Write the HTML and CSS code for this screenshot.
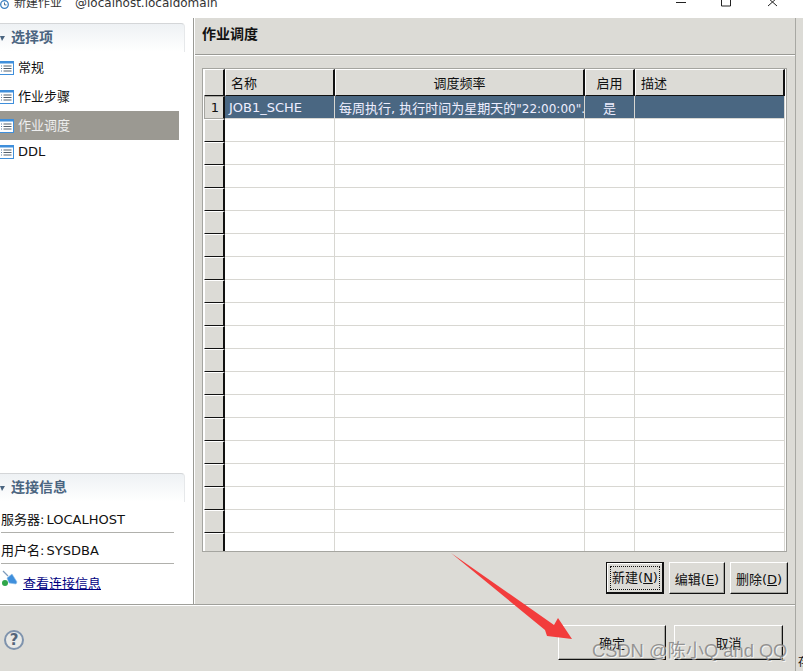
FILE: index.html
```html
<!DOCTYPE html>
<html lang="zh-CN">
	<head>
		<meta charset="UTF-8" />
		<title>新建作业</title>
		<link rel="stylesheet" href="styles.css">
	</head>
	<body>
		<svg class="defs" width="0" height="0">
			<symbol id="page-icon" viewBox="0 0 16 14">
				<rect x="0.5" y="0.5" width="15" height="13" fill="#fff" stroke="#3f8fdc"/>
				<rect x="1" y="1" width="14" height="1.5" fill="#3f8fdc"/>
				<path d="M3 5h1M3 7.5h1M3 10h1" stroke="#5a7fa8" fill="none"/>
				<path d="M5.5 5h8M5.5 7.5h8M5.5 10h8" stroke="#55606c" fill="none"/>
			</symbol>
		</svg>

		<!-- 标题栏 -->
		<div class="titlebar">
			<svg class="title-icon" width="9" height="10" viewBox="0 0 9 10">
				<circle cx="4.5" cy="4.5" r="3.8" fill="#fff" stroke="#3b7fc0" stroke-width="1.3"/>
				<path d="M4.5 2.5v2.4h2" stroke="#3b6f9f" fill="none"/>
			</svg>
			<span class="title-name">新建作业</span>
			<span class="title-host">@localhost.localdomain</span>
			<div class="win-controls">
				<svg width="103" height="10" viewBox="0 0 103 10">
					<path d="M0 2.5h10" stroke="#222" fill="none"/>
					<path d="M45.5 -3h9v9h-9z" stroke="#222" fill="none"/>
					<path d="M92 -2l9 8M101 -2l-9 8" stroke="#222" fill="none"/>
				</svg>
			</div>
		</div>

		<div class="window">
			<div class="main">
				<!-- 左侧：选择项 & 连接信息 -->
				<div class="sidebar">
					<div>
						<div class="section-head"><i class="twisty"></i>选择项</div>
						<ul class="nav">
							<li><svg class="nav-icon"><use href="#page-icon"/></svg>常规</li>
							<li><svg class="nav-icon"><use href="#page-icon"/></svg>作业步骤</li>
							<li class="active"><svg class="nav-icon"><use href="#page-icon"/></svg>作业调度</li>
							<li class="short"><svg class="nav-icon"><use href="#page-icon"/></svg>DDL</li>
						</ul>
					</div>
					<div>
						<div class="section-head info-head"><i class="twisty"></i>连接信息</div>
						<div class="info-row">服务器: LOCALHOST</div>
						<div class="info-row">用户名: SYSDBA</div>
						<div class="link-row">
							<svg width="18" height="18" viewBox="0 0 18 18">
								<path d="M2 2l5 5" stroke="#7f9cbc" stroke-width="1.2" fill="none"/>
								<path d="M6 9l5-4 5 8-1 2-7-1z" fill="#3f8fdc" stroke="#8fc0ea" stroke-width="0.6"/>
								<circle cx="4" cy="14" r="3" fill="#2fa64a"/>
							</svg>
							<a href="#">查看连接信息</a>
						</div>
					</div>
				</div>

				<!-- 右侧：作业调度 -->
				<div class="content">
					<div class="content-head">作业调度</div>
					<div class="content-body">
						<div class="grid-box">
							<table class="grid">
								<colgroup>
									<col class="c-no"><col class="c-name"><col class="c-freq"><col class="c-on"><col class="c-desc">
								</colgroup>
								<thead>
									<tr>
										<th></th>
										<th class="left">名称</th>
										<th>调度频率</th>
										<th>启用</th>
										<th class="left">描述</th>
									</tr>
								</thead>
								<tbody>
									<tr class="selected">
										<th>1</th>
										<td>JOB1_SCHE</td>
										<td>每周执行, 执行时间为星期天的<span class="num">"22:00:00".</span></td>
										<td class="center">是</td>
										<td></td>
									</tr>
									<tr><th></th><td></td><td></td><td></td><td></td></tr>
									<tr><th></th><td></td><td></td><td></td><td></td></tr>
									<tr><th></th><td></td><td></td><td></td><td></td></tr>
									<tr><th></th><td></td><td></td><td></td><td></td></tr>
									<tr><th></th><td></td><td></td><td></td><td></td></tr>
									<tr><th></th><td></td><td></td><td></td><td></td></tr>
									<tr><th></th><td></td><td></td><td></td><td></td></tr>
									<tr><th></th><td></td><td></td><td></td><td></td></tr>
									<tr><th></th><td></td><td></td><td></td><td></td></tr>
									<tr><th></th><td></td><td></td><td></td><td></td></tr>
									<tr><th></th><td></td><td></td><td></td><td></td></tr>
									<tr><th></th><td></td><td></td><td></td><td></td></tr>
									<tr><th></th><td></td><td></td><td></td><td></td></tr>
									<tr><th></th><td></td><td></td><td></td><td></td></tr>
									<tr><th></th><td></td><td></td><td></td><td></td></tr>
									<tr><th></th><td></td><td></td><td></td><td></td></tr>
									<tr><th></th><td></td><td></td><td></td><td></td></tr>
									<tr><th></th><td></td><td></td><td></td><td></td></tr>
									<tr><th></th><td></td><td></td><td></td><td></td></tr>
								</tbody>
							</table>
						</div>
						<div class="grid-actions">
							<button class="btn default"><span class="focus">新建(<u>N</u>)</span></button>
							<button class="btn edit">编辑(<u>E</u>)</button>
							<button class="btn del">删除(<u>D</u>)</button>
						</div>
					</div>
				</div>
			</div>

			<div class="footer">
				<span class="help">?</span>
				<div class="footer-actions">
					<button class="btn wide">确定</button>
					<button class="btn wide">取消</button>
				</div>
			</div>
		</div>

		<!-- 截图上的标注 -->
		<svg class="arrow" width="140" height="100" viewBox="445 548 140 100">
			<polygon points="451,553 554,625 558,618 572,639 547,636 545,630" fill="#f23c3c"/>
		</svg>
		<div class="watermark">CSDN @陈小Q and QQ</div>
		<div class="corner-char">存</div>
	</body>
</html>
```

FILE: styles.css
```css
* {
	box-sizing: border-box;
}
html,
body {
	height: 100%;
}
body {
	position: relative;
	margin: 0;
	overflow: hidden;
	background: #dcdbd6;
	color: #111;
	font-family: "DejaVu Sans", "Noto Sans CJK SC", sans-serif;
	font-size: 13px;
}
.defs {
	position: absolute;
}

/* 标题栏 */
.titlebar {
	display: flex;
	height: 18px;
	background: #fff;
	overflow: hidden;
	line-height: 14px;
	font-size: 12px;
	color: #333;
}
.title-icon {
	flex: none;
	margin: 0 5px 0 0;
}
.title-name {
	margin-top: -4px;
	width: 61px;
	flex: none;
}
.title-host {
	margin-top: -4px;
	flex: none;
}
.win-controls {
	margin-left: auto;
	margin-right: 24px;
	line-height: 0;
}

.window {
	width: 796px;
	height: 653px;
	border-right: 1px solid #a8a8a3;
}
.main {
	display: flex;
	height: 587px;
	border-bottom: 1px solid #a0a09b;
}

/* 左侧 */
.sidebar {
	flex: none;
	width: 193px;
	padding-top: 5px;
	padding-bottom: 7px;
	background: #fff;
	display: flex;
	flex-direction: column;
	justify-content: space-between;
}
.section-head {
	position: relative;
	width: 185px;
	height: 29px;
	margin-bottom: 1px;
	padding-left: 11px;
	border-top: 1px solid #d4d6d8;
	border-right: 1px solid #e6e8ea;
	border-top-right-radius: 4px;
	background: linear-gradient(#eef1f4, #fff);
	color: #4a6480;
	font-size: 14px;
	font-weight: bold;
	line-height: 27px;
}
.info-head {
	margin-bottom: 0;
}
.twisty {
	position: absolute;
	left: 0;
	top: 12px;
	border-top: 5px solid #4a6480;
	border-left: 2px solid transparent;
	border-right: 3px solid transparent;
}
.nav {
	list-style: none;
	margin: 0;
	padding: 0;
	width: 179px;
}
.nav li {
	display: flex;
	align-items: center;
	height: 29px;
	line-height: 31px;
}
.nav li.short {
	height: 23px;
	line-height: 25px;
}
.nav li.active {
	background: #9b9992;
	color: #eee;
}
.nav-icon {
	flex: none;
	width: 16px;
	height: 14px;
	margin-left: -2px;
	margin-right: 4px;
}
.info-row {
	width: 173px;
	margin-left: 1px;
	height: 31px;
	line-height: 36px;
	word-spacing: -2px;
	border-bottom: 1px solid #b0b0ac;
}
.link-row {
	display: flex;
	align-items: center;
	height: 33px;
	padding-left: 1px;
	padding-top: 3px;
}
.link-row svg {
	margin-right: 4px;
	margin-top: -8px;
}
.link-row a {
	color: #00007f;
	font-size: 13px;
}

/* 右侧 */
.content {
	flex: 1;
	border-left: 1px solid #9a9a95;
	box-shadow: inset 1px 0 0 #fff;
	background: #dcdbd6;
}
.content-head {
	height: 37px;
	margin-left: 1px;
	padding-left: 7px;
	border-bottom: 1px solid #9a9a95;
	font-size: 14px;
	font-weight: bold;
	line-height: 32px;
}
.content-body {
	padding: 12px 0 0 7px;
	border-top: 1px solid #fff;
	margin-left: 1px;
}
.grid-box {
	width: 585px;
	height: 484px;
	padding: 0 1px;
	border: 1px solid #a5a5a0;
	background: #fff;
	overflow: hidden;
}
.grid {
	table-layout: fixed;
	border-collapse: separate;
	border-spacing: 0;
	width: 581px;
}
.c-no { width: 21px; }
.c-name { width: 110px; }
.c-freq { width: 250px; }
.c-on { width: 50px; }
.c-desc { width: 150px; }

.grid thead th {
	height: 27px;
	padding: 0 5px;
	background: #dcdbd6;
	border-top: 1px solid #fff;
	border-left: 1px solid #fff;
	border-right: 2px solid #111;
	border-bottom: 1px solid #111;
	font-weight: normal;
	text-align: center;
}
.grid thead th.left {
	text-align: left;
}
.grid tbody tr {
	height: 23px;
}
.grid tbody th {
	padding: 0;
	background: #dcdbd6;
	border-top: 1px solid #fff;
	border-left: 1px solid #fff;
	border-right: 2px solid #111;
	border-bottom: 1px solid #111;
	font-weight: normal;
}
.grid td {
	padding: 0 0 0 4px;
	border-right: 1px solid #d8d7d2;
	border-bottom: 1px solid #d8d7d2;
	white-space: nowrap;
	overflow: hidden;
}
.grid td.center {
	text-align: center;
	padding: 0;
}
.grid .num {
	font-size: 12px;
}
.grid .selected td {
	background: #4a6782;
	color: #eef;
}
.grid .selected th {
	border: 1px solid #a5a5a0;
	border-right: 2px solid #111;
	text-align: right;
	padding-right: 4px;
}

/* 按钮 */
.grid-actions {
	display: flex;
	justify-content: flex-end;
	gap: 5px;
	width: 586px;
	margin-top: 10px;
}
.btn {
	padding: 0;
	background: #dcdbd6;
	border: 1px solid #fff;
	border-right-color: #111;
	border-bottom-color: #111;
	box-shadow: inset -1px -1px 0 #a5a5a0;
	color: #111;
	font-family: inherit;
	font-size: 13px;
	height: 32px;
	width: 56px;
}
.btn.default {
	width: 58px;
	border: 1px solid #111;
	border-right-width: 2px;
	border-bottom-width: 2px;
	box-shadow: inset 1px 1px 0 #fff;
}
.btn.del {
	width: 58px;
}
.focus {
	display: block;
	margin: 3px 2px 2px 3px;
	line-height: 22px;
	border: 1px dotted #111;
}
.btn.wide {
	width: 108px;
	height: 35px;
}
.btn.wide + .btn.wide {
	width: 109px;
}

/* 底部 */
.footer {
	display: flex;
	align-items: flex-start;
	justify-content: space-between;
	height: 65px;
	border-top: 1px solid #fff;
	padding: 19px 12px 0 4px;
}
.help {
	width: 20px;
	height: 20px;
	margin-top: 5px;
	border: 2px solid #7f93ad;
	border-radius: 50%;
	background: #e9e9e6;
	color: #55657a;
	font-size: 15px;
	font-weight: bold;
	line-height: 16px;
	text-align: center;
}
.footer-actions {
	display: flex;
	gap: 8px;
}

/* 标注 */
.arrow {
	position: absolute;
	left: 445px;
	top: 548px;
}
.watermark {
	position: absolute;
	left: 592px;
	top: 640px;
	color: rgba(120, 120, 120, 0.75);
	font-size: 18.3px;
	line-height: 22px;
	white-space: nowrap;
	text-shadow: 1px 1px 0 rgba(255, 255, 255, 0.7);
	font-family: "Liberation Sans", "Noto Sans CJK SC", sans-serif;
}
.corner-char {
	position: absolute;
	left: 798px;
	top: 656px;
	font-size: 11px;
	line-height: 14px;
}
```
